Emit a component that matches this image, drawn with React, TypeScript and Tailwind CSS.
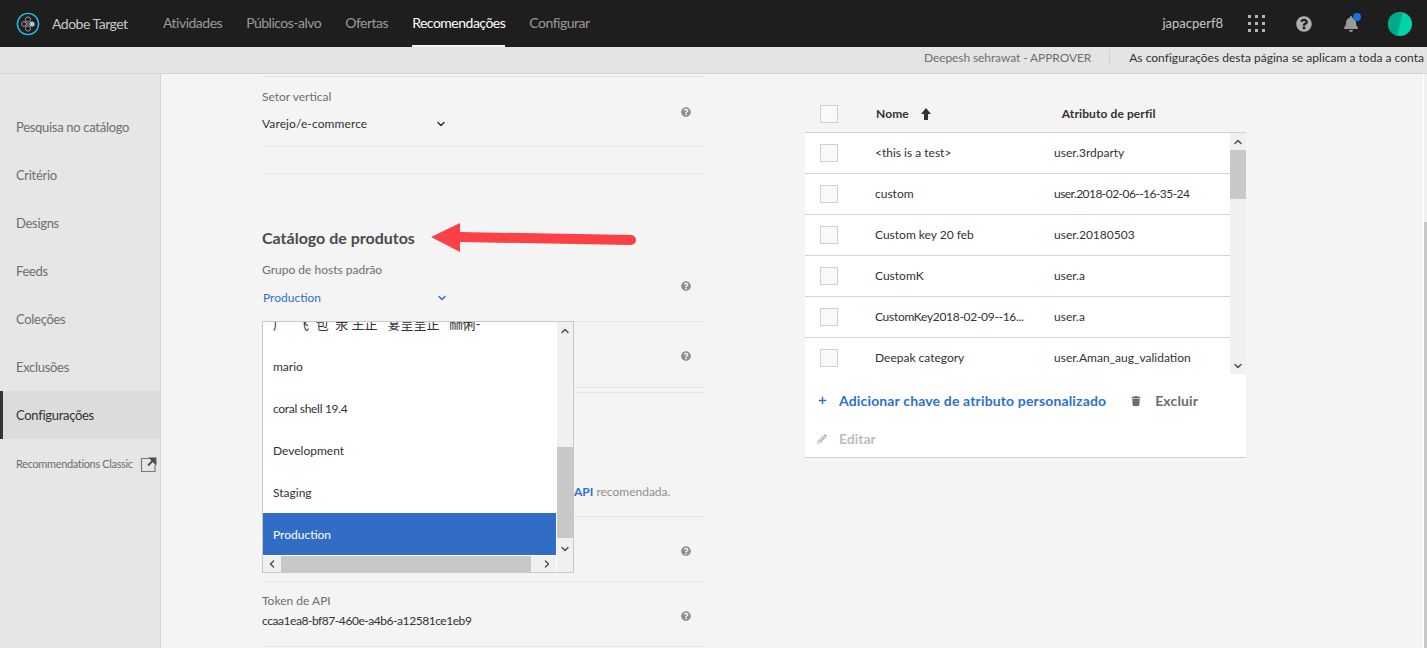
import { FaQuestionCircle, FaBell, FaTrash, FaPencilAlt } from "react-icons/fa"
import { ChevronDown, ChevronUp, ChevronLeft, ChevronRight, Plus } from "lucide-react"

const font = "font-['Lato','Noto_Sans_CJK_SC',sans-serif]"

const topNav = [
    { label: "Atividades", active: false },
    { label: "Públicos-alvo", active: false },
    { label: "Ofertas", active: false },
    { label: "Recomendações", active: true },
    { label: "Configurar", active: false },
]

const sideNav = ["Pesquisa no catálogo", "Critério", "Designs", "Feeds", "Coleções", "Exclusões", "Configurações"]

const rows = [
    { name: "<this is a test>", attr: "user.3rdparty", nameCls: "", attrCls: "" },
    { name: "custom", attr: "user.2018-02-06--16-35-24", nameCls: "", attrCls: "tracking-[-0.55px]" },
    { name: "Custom key 20 feb", attr: "user.20180503", nameCls: "", attrCls: "" },
    { name: "CustomK", attr: "user.a", nameCls: "", attrCls: "" },
    { name: "CustomKey2018-02-09--16...", attr: "user.a", nameCls: "tracking-[-0.3px]", attrCls: "" },
    { name: "Deepak category", attr: "user.Aman_aug_validation", nameCls: "", attrCls: "" },
]

const options = [
    { label: "广   飞  包  汞 王正   宴呈呈正   ㎜俐-", cls: "text-[13px]" },
    { label: "mario", cls: "" },
    { label: "coral shell 19.4", cls: "tracking-[-0.3px]" },
    { label: "Development", cls: "" },
    { label: "Staging", cls: "" },
    { label: "Production", cls: "bg-[#316dc7] text-white" },
]

function Logo() {
    return (
        <svg width="24" height="24" viewBox="0 0 24 24" fill="none">
            <circle cx="12" cy="12" r="10.6" stroke="#1cc4e8" strokeWidth="1.4" />
            <g stroke="#9a9a9a" strokeWidth="1">
                <circle cx="12" cy="7.5" r="2.6" />
                <circle cx="8" cy="12" r="2.4" />
                <circle cx="12" cy="16.5" r="2.6" />
                <path d="M10 12h3M10 9.5l-1 1M10.5 14.5l-1-1" />
            </g>
            <circle cx="16" cy="12" r="2.6" fill="#b8c4c8" />
        </svg>
    )
}

function Checkbox() {
    return <div className="w-[18px] h-[18px] border border-[#d0d0d0] bg-[#f9f9f9] shrink-0" />
}

function Help({ className = "" }: { className?: string }) {
    return <FaQuestionCircle size={10} className={`mr-[13px] text-[#8e8e8e] ${className}`} />
}

export default function App() {
    return (
        <div className={`${font} h-[648px] w-[1427px] overflow-hidden flex flex-col bg-[#f4f4f4]`}>
            {/* Top bar */}
            <header className="h-[47px] shrink-0 bg-[#1e1e1e] flex items-center pl-[16px] pr-[15px]">
                <Logo />
                <span className="ml-[12px] w-[111px] text-[14px] tracking-[-0.5px] text-[#c8c8c8]">Adobe Target</span>
                <nav className="flex h-full gap-[24px]">
                    {topNav.map((item) => (
                        <a
                            key={item.label}
                            href="#"
                            className={`h-full flex items-center text-[14px] tracking-[-0.5px] border-b-2 ${item.active ? "text-white border-[#f4f4f4]" : "text-[#9a9a9a] border-transparent"}`}
                        >
                            {item.label}
                        </a>
                    ))}
                </nav>
                <div className="ml-auto flex items-center">
                    <span className="text-[13px] text-[#c8c8c8]">japacperf8</span>
                    <div className="ml-[25px] grid grid-cols-3 gap-[4px]">
                        {Array.from({ length: 9 }).map((_, i) => (
                            <span key={i} className="w-[3px] h-[3px] bg-[#b4b4b4]" />
                        ))}
                    </div>
                    <FaQuestionCircle size={16} className="ml-[31px] text-[#b0b0b0]" />
                    <div className="relative ml-[31px]">
                        <FaBell size={16} className="text-[#9a9a9a]" />
                        <span className="absolute -top-[3px] -right-[2px] w-[8px] h-[8px] rounded-full bg-[#1473e6]" />
                    </div>
                    <div className="ml-[29px] w-[24px] h-[24px] rounded-full overflow-hidden">
                        <svg width="24" height="24" viewBox="0 0 24 24">
                            <rect width="24" height="24" fill="#00d4a8" />
                            <path d="M0 0H15L9 24H0Z" fill="#00a98a" />
                        </svg>
                    </div>
                </div>
            </header>

            {/* Sub bar */}
            <div className="h-[27px] shrink-0 bg-[#e4e4e4] border-b border-[#d4d4d4] flex items-center justify-end pb-[4px] pr-[3px] text-[12px]">
                <span className="text-[#6e6e6e] tracking-[-0.1px]">Deepesh sehrawat - APPROVER</span>
                <span className="ml-[18px] mr-[19px] w-px h-[16px] bg-[#d0d0d0]" />
                <span className="text-[#323232] tracking-[0.02px]">As configurações desta página se aplicam a toda a conta</span>
            </div>

            <div className="flex-1 flex min-h-0">
                {/* Side nav */}
                <aside className="w-[161px] shrink-0 bg-[#e6e6e6] border-r border-[#d4d4d4] pt-[29px]">
                    {sideNav.map((label) => {
                        const active = label === "Configurações"
                        return (
                            <a
                                key={label}
                                href="#"
                                className={`h-[48px] pt-[2px] flex items-center text-[13px] tracking-[-0.3px] border-l-[3px] pl-[13px] ${active ? "bg-[#dcdcdc] border-[#323232] text-[#323232]" : "border-transparent text-[#6e6e6e]"}`}
                            >
                                {label}
                            </a>
                        )
                    })}
                    <div className="flex items-center h-[50px] pl-[16px] text-[11px] tracking-[-0.35px] whitespace-nowrap text-[#6e6e6e]">
                        Recommendations Classic
                        <svg width="17" height="17" viewBox="0 0 17 17" fill="none" className="ml-[7px] shrink-0">
                            <path d="M9 2.5H1.5V15.5H15V9" stroke="#7a7a7a" strokeWidth="1.2" />
                            <path d="M8 9.5L14 3.5M10.5 2.5H15.5V7.5Z" stroke="#4a4a4a" strokeWidth="1.8" />
                        </svg>
                    </div>
                </aside>

                {/* Main */}
                <main className="flex-1 flex min-w-0 pl-[101px]">
                    {/* Form column */}
                    <div className="relative w-[442px] shrink-0 pt-[2px]">
                        <div className="border-t border-[#e6e6e6]" />
                        <div className="h-[70px] pb-[2px] flex items-center justify-between border-b border-[#e6e6e6]">
                            <div>
                                <div className="text-[12px] leading-[20px] text-[#6e6e6e]">Setor vertical</div>
                                <div className="mt-[7px] flex items-center w-[185px] justify-between text-[12px] leading-[20px] tracking-[0.1px] text-[#323232]">
                                    Varejo/e-commerce
                                    <ChevronDown size={12} strokeWidth={3} />
                                </div>
                            </div>
                            <Help className="mt-[2px]" />
                        </div>
                        <div className="h-[27px] border-b border-[#e6e6e6]" />

                        <h2 className="mt-[52px] text-[16px] leading-[24px] font-bold text-[#4b4b4b]">Catálogo de produtos</h2>

                        <div className="mt-[3px] h-[69px] pb-[6px] flex items-center justify-between border-b border-[#e6e6e6]">
                            <div>
                                <div className="text-[12px] leading-[20px] text-[#6e6e6e]">Grupo de hosts padrão</div>
                                <div className="mt-[8px] flex items-center w-[186px] justify-between pl-[1px] text-[12px] leading-[20px] text-[#2f6fd0]">
                                    Production
                                    <ChevronDown size={12} strokeWidth={3} />
                                </div>
                            </div>
                            <Help className="mt-[4px]" />
                        </div>
                        <div className="h-[66px] flex items-center justify-end border-b border-[#e6e6e6]">
                            <Help className="mt-[2px]" />
                        </div>
                        <div className="h-[125px] mt-[4px] pt-[89px] border-t border-b border-[#e6e6e6] pl-[312px] text-[12px] leading-[20px] text-[#8e8e8e]">
                            <span className="font-bold text-[#2f6fd0]">API</span> recomendada.
                        </div>
                        <div className="h-[65px] flex items-center justify-end border-b border-[#e6e6e6]">
                            <Help className="mt-[4px]" />
                        </div>
                        <div className="h-[65px] pb-[6px] flex items-center justify-between border-b border-[#e6e6e6]">
                            <div>
                                <div className="text-[12px] leading-[20px] text-[#6e6e6e]">Token de API</div>
                                <div className="text-[12px] leading-[20px] tracking-[-0.45px] text-[#323232]">ccaa1ea8-bf87-460e-a4b6-a12581ce1eb9</div>
                            </div>
                            <Help className="mt-[10px]" />
                        </div>

                        {/* Open select list */}
                        <div className="absolute left-0 top-[247px] w-[312px] h-[252px] bg-white border border-[#c8c8c8] grid grid-cols-[1fr_17px] grid-rows-[1fr_17px] text-[12px] text-[#323232]">
                            <div className="flex flex-col justify-end overflow-hidden">
                                {options.map((opt) => (
                                    <div
                                        key={opt.label}
                                        className={`h-[42px] shrink-0 pt-[2px] flex items-center pl-[10px] whitespace-pre ${opt.cls}`}
                                    >
                                        {opt.label}
                                    </div>
                                ))}
                            </div>
                            <div className="row-span-2 bg-[#f0f0f0] border-l border-white flex flex-col items-center">
                                <ChevronUp size={12} strokeWidth={3} className="mt-[3px] text-[#505050]" />
                                <div className="mt-auto w-full h-[91px] bg-[#c8c8c8]" />
                                <ChevronDown size={12} strokeWidth={3} className="mt-[5px] mb-[17px] text-[#505050]" />
                            </div>
                            <div className="bg-[#f0f0f0] border-t border-white flex items-center">
                                <ChevronLeft size={12} strokeWidth={3} className="mx-[3px] text-[#505050]" />
                                <div className="h-full w-[250px] bg-[#c8c8c8]" />
                                <ChevronRight size={12} strokeWidth={3} className="ml-auto mr-[3px] text-[#505050]" />
                            </div>
                        </div>

                        {/* Annotation arrow */}
                        <svg width="210" height="34" viewBox="0 0 210 34" className="absolute left-[169px] top-[147px]">
                            <path d="M0 16L29 2V11L200 14A5 5 0 0 1 200 24L29 21V31Z" fill="#fb4046" />
                        </svg>
                    </div>

                    {/* Attribute table */}
                    <div className="ml-[101px] w-[441px] shrink-0 pt-[18px]">
                        <div className="h-[41px] pt-[3px] flex items-center border-b border-[#d0d0d0] text-[12px] font-bold tracking-[0.1px] text-[#323232]">
                            <div className="ml-[15px]"><Checkbox /></div>
                            <span className="ml-[38px]">Nome</span>
                            <svg width="10" height="12" viewBox="0 0 10 12" className="ml-[12px]">
                                <path d="M5 0L10 6H7V12H3V6H0Z" fill="#323232" />
                            </svg>
                            <span className="ml-[131px]">Atributo de perfil</span>
                        </div>
                        <div className="bg-white border-b border-[#d0d0d0]">
                            <div className="h-[241px] flex">
                                <div className="flex-1 overflow-hidden">
                                    {rows.map((row) => (
                                        <div key={row.name} className="h-[41px] shrink-0 flex items-center border-b border-[#d4d4d4] text-[12px] text-[#323232]">
                                            <div className="ml-[15px]"><Checkbox /></div>
                                            <span className={`ml-[37px] w-[179px] whitespace-nowrap ${row.nameCls}`}>{row.name}</span>
                                            <span className={row.attrCls}>{row.attr}</span>
                                        </div>
                                    ))}
                                </div>
                                <div className="w-[16px] bg-[#f0f0f0] flex flex-col items-center">
                                    <ChevronUp size={12} strokeWidth={3} className="mt-[3px] text-[#505050]" />
                                    <div className="mt-[2px] w-full h-[49px] bg-[#c8c8c8]" />
                                    <ChevronDown size={12} strokeWidth={3} className="mt-auto mb-[2px] text-[#505050]" />
                                </div>
                            </div>
                            <div className="h-[56px] pb-[3px] flex items-center text-[14px] tracking-[0.15px] font-bold">
                                <Plus size={11} strokeWidth={3} className="ml-[12px] text-[#2f6fd0]" />
                                <span className="ml-[11px] text-[#2f6fd0]">Adicionar chave de atributo personalizado</span>
                                <FaTrash size={10} className="ml-[25px] text-[#6e6e6e]" />
                                <span className="ml-[14px] text-[#6e6e6e]">Excluir</span>
                            </div>
                            <div className="h-[27px] pb-[10px] flex items-center text-[14px] font-bold text-[#bdbdbd]">
                                <FaPencilAlt size={10} className="ml-[12px]" />
                                <span className="ml-[12px]">Editar</span>
                            </div>
                        </div>
                    </div>

                    {/* Page scrollbar */}
                    <div className="ml-auto w-[4px] shrink-0 bg-[#f0f0f0] border-l border-white flex flex-col">
                        <div className="mt-[148px] flex-1 bg-[#c8c8c8]" />
                    </div>
                </main>
            </div>
        </div>
    )
}
